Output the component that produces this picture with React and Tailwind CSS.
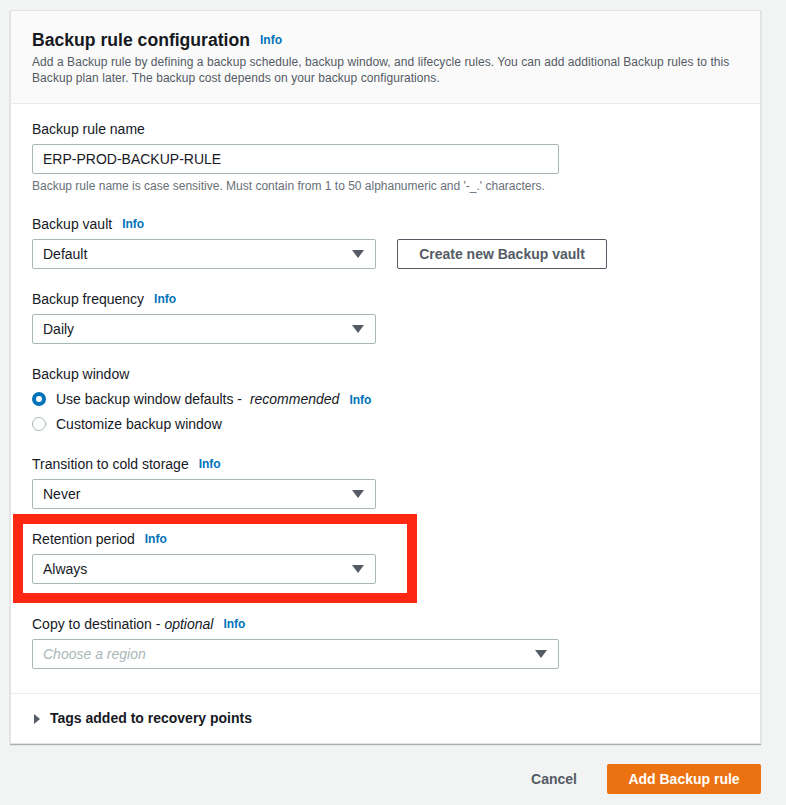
import React from "react";

const font = { fontFamily: '"Liberation Sans", Arial, sans-serif' };

function Info() {
  return <span className="ml-[10px] text-[12px] font-bold text-[#0073bb]">Info</span>;
}

function Caret() {
  return (
    <svg width="12" height="8" viewBox="0 0 12 8" className="shrink-0">
      <polygon points="0,0 12,0 6,8" fill="#545b64" />
    </svg>
  );
}

function Select({ value, placeholder, wide }) {
  return (
    <div
      className={`flex h-[30px] items-center justify-between rounded-[2px] border border-[#aab7b8] bg-white pl-[10px] pr-[11px] text-[14px] ${
        wide ? "w-[527px]" : "w-[344px]"
      }`}
    >
      {placeholder ? (
        <span className="italic text-[#aab7b8]">{placeholder}</span>
      ) : (
        <span className="text-[#16191f]">{value}</span>
      )}
      <Caret />
    </div>
  );
}

function Label({ children }) {
  return <div className="flex h-[22px] items-center text-[14px] leading-[22px] text-[#16191f]">{children}</div>;
}

function Radio({ checked, children }) {
  return (
    <div className="flex h-[22px] items-center text-[14px] text-[#16191f]">
      {checked ? (
        <span className="ml-[-1px] box-border h-[14px] w-[14px] rounded-full border-[4px] border-[#0073bb] bg-white" />
      ) : (
        <span className="ml-[-1px] box-border h-[14px] w-[14px] rounded-full border border-[#aab7b8] bg-white" />
      )}
      <span className="ml-[10px]">{children}</span>
    </div>
  );
}

export default function App() {
  return (
    <div className="min-h-screen bg-[#f2f3f3] pt-[10px]" style={font}>
      <div className="ml-[10px] w-[751px]">
        <div className="border border-[#dfe3e3] bg-white shadow-[0_1px_1px_0_rgba(0,28,36,0.3)]">
          <div className="border-b border-[#eaeded] bg-[#fafafa] pb-[17px] pl-[21px] pr-[20px] pt-[17px]">
            <div className="flex h-[24px] items-center">
              <span className="text-[17.6px] font-bold text-[#16191f]">Backup rule configuration</span>
              <Info />
            </div>
            <div className="mt-[2px] text-[12px] leading-[16px] text-[#545b64]">
              <div className="whitespace-nowrap tracking-[0.07px]">
                Add a Backup rule by defining a backup schedule, backup window, and lifecycle rules. You can add additional Backup rules to this
              </div>
              <div className="whitespace-nowrap tracking-[0.07px]">
                Backup plan later. The backup cost depends on your backup configurations.
              </div>
            </div>
          </div>

          <div className="flex flex-col border-b border-[#eaeded] pb-[24px] pl-[21px] pr-[20px] pt-[14px]">
            <Label>Backup rule name</Label>
            <div className="mt-[4px] flex h-[30px] w-[527px] items-center rounded-[2px] border border-[#aab7b8] bg-white pl-[10px] text-[14px] text-[#16191f]">
              ERP-PROD-BACKUP-RULE
            </div>
            <div className="mt-[4px] text-[12px] leading-[16px] text-[#687078]">
              Backup rule name is case sensitive. Must contain from 1 to 50 alphanumeric and '-_.' characters.
            </div>

            <div className="mt-[19px]">
              <Label>
                Backup vault <Info />
              </Label>
              <div className="mt-[4px] flex items-center gap-[21px]">
                <Select value="Default" />
                <div className="flex h-[30px] w-[210px] items-center justify-center rounded-[2px] border border-[#545b64] bg-white text-[14px] font-bold text-[#545b64]">
                  Create new Backup vault
                </div>
              </div>
            </div>

            <div className="mt-[19px]">
              <Label>
                Backup frequency <Info />
              </Label>
              <div className="mt-[4px]">
                <Select value="Daily" />
              </div>
            </div>

            <div className="mt-[19px]">
              <Label>Backup window</Label>
              <div className="mt-[3px] flex flex-col gap-[3px] pl-[1px]">
                <Radio checked>
                  Use backup window defaults - <span className="ml-[4px] italic">recommended</span>
                  <Info />
                </Radio>
                <Radio>Customize backup window</Radio>
              </div>
            </div>

            <div className="mt-[18px]">
              <Label>
                Transition to cold storage <Info />
              </Label>
              <div className="mt-[4px]">
                <Select value="Never" />
              </div>
            </div>

            <div className="relative mt-[19px] w-[344px]">
              <Label>
                Retention period <Info />
              </Label>
              <div className="mt-[4px]">
                <Select value="Always" />
              </div>
              <div className="pointer-events-none absolute bottom-[-19px] left-[-19px] right-[-41px] top-[-14px] border-[10px] border-[#fe2712]" />
            </div>

            <div className="mt-[29px]">
              <Label>
                Copy to destination - <span className="ml-[4px] italic">optional</span> <Info />
              </Label>
              <div className="mt-[4px]">
                <Select wide placeholder="Choose a region" />
              </div>
            </div>
          </div>

          <div className="flex h-[49px] items-center pl-[23px]">
            <svg width="6" height="10" viewBox="0 0 6 10">
              <polygon points="0,0 6,5 0,10" fill="#545b64" />
            </svg>
            <span className="ml-[10px] text-[14px] font-bold text-[#16191f]">Tags added to recovery points</span>
          </div>
        </div>

        <div className="mt-[20px] flex items-center justify-end">
          <div className="mr-[10px] flex h-[30px] items-center px-[20px] text-[14px] font-bold text-[#545b64]">Cancel</div>
          <div className="flex h-[30px] w-[154px] items-center justify-center rounded-[2px] bg-[#ec7211] text-[14px] font-bold text-white">
            Add Backup rule
          </div>
        </div>
      </div>
    </div>
  );
}
